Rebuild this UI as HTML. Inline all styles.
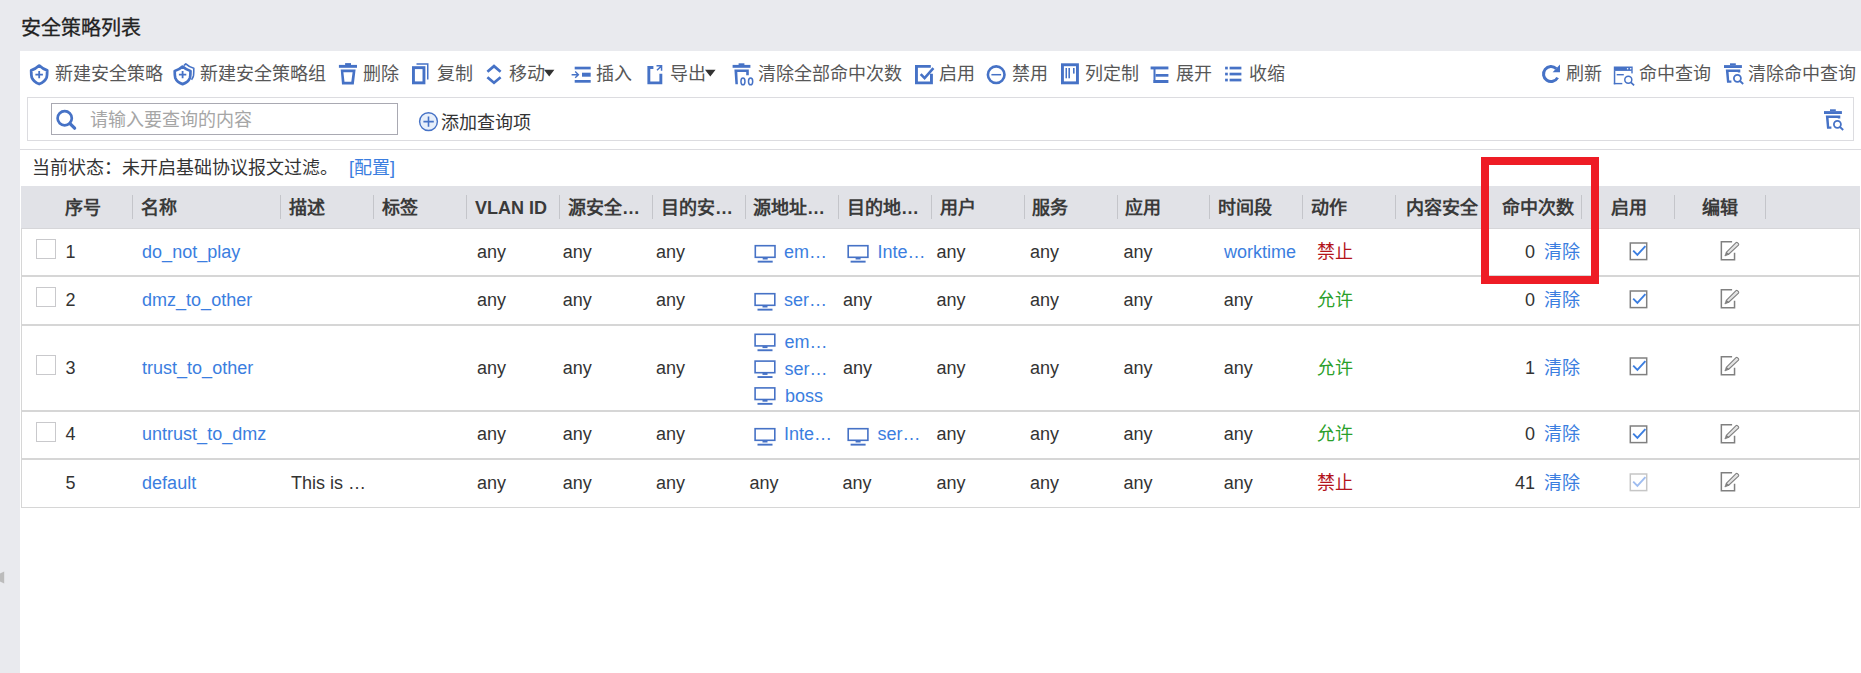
<!DOCTYPE html>
<html lang="zh-CN"><head><meta charset="utf-8"><title>安全策略列表</title>
<style>
html,body{margin:0;padding:0;background:#fff;width:1861px;height:673px;overflow:hidden;font-family:"Liberation Sans",sans-serif}
.t{position:absolute;white-space:nowrap;line-height:20px}
.b{position:absolute}
svg{position:absolute;left:0;top:0}
</style></head><body>
<div class="b" style="left:0px;top:0px;width:1861px;height:51px;background:#e9eaee;"></div>
<div class="b" style="left:0px;top:0px;width:20px;height:673px;background:#e9eaee;"></div>
<div class="t" style="left:21px;top:18px;font-size:20px;color:#222;-webkit-text-stroke:0.3px #222;">安全策略列表</div>
<div class="t" style="left:55px;top:64px;font-size:18px;color:#575757;">新建安全策略</div>
<div class="t" style="left:200px;top:64px;font-size:18px;color:#575757;">新建安全策略组</div>
<div class="t" style="left:362.5px;top:64px;font-size:18px;color:#575757;">删除</div>
<div class="t" style="left:436.5px;top:64px;font-size:18px;color:#575757;">复制</div>
<div class="t" style="left:508.7px;top:64px;font-size:18px;color:#575757;">移动</div>
<div class="t" style="left:596.4px;top:64px;font-size:18px;color:#575757;">插入</div>
<div class="t" style="left:670px;top:64px;font-size:18px;color:#575757;">导出</div>
<div class="t" style="left:757.6px;top:64px;font-size:18px;color:#575757;">清除全部命中次数</div>
<div class="t" style="left:939px;top:64px;font-size:18px;color:#575757;">启用</div>
<div class="t" style="left:1012px;top:64px;font-size:18px;color:#575757;">禁用</div>
<div class="t" style="left:1085px;top:64px;font-size:18px;color:#575757;">列定制</div>
<div class="t" style="left:1176.4px;top:64px;font-size:18px;color:#575757;">展开</div>
<div class="t" style="left:1248.5px;top:64px;font-size:18px;color:#575757;">收缩</div>
<div class="t" style="left:1565.5px;top:64px;font-size:18px;color:#575757;">刷新</div>
<div class="t" style="left:1639px;top:64px;font-size:18px;color:#575757;">命中查询</div>
<div class="t" style="left:1747.8px;top:64px;font-size:18px;color:#575757;">清除命中查询</div>
<div class="b" style="left:27px;top:97px;width:1826px;height:43px;background:transparent;border:1px solid #dcdce0;box-sizing:border-box;width:1827px;height:44px"></div>
<div class="b" style="left:51px;top:103px;width:347px;height:32px;background:#fff;border:1px solid #a9a9b2;box-sizing:border-box"></div>
<div class="t" style="left:89.5px;top:110px;font-size:18px;color:#a6a6a6;">请输入要查询的内容</div>
<div class="t" style="left:440.5px;top:112.5px;font-size:18px;color:#333;">添加查询项</div>
<div class="b" style="left:20px;top:149px;width:1841px;height:1px;background:#dcdce0;"></div>
<div class="t" style="left:32px;top:158px;font-size:18px;color:#333;">当前状态：未开启基础协议报文过滤。</div>
<div class="t" style="left:349px;top:158px;font-size:18px;color:#3b7ee0;">[配置]</div>
<div class="b" style="left:21px;top:186px;width:1839px;height:42px;background:#e1e2e7;"></div>
<div class="b" style="left:21px;top:228px;width:1839px;height:1px;background:#d6d6d9;"></div>
<div class="b" style="left:132px;top:195px;width:1px;height:24px;background:#c4c5ca;"></div>
<div class="b" style="left:280px;top:195px;width:1px;height:24px;background:#c4c5ca;"></div>
<div class="b" style="left:373px;top:195px;width:1px;height:24px;background:#c4c5ca;"></div>
<div class="b" style="left:466px;top:195px;width:1px;height:24px;background:#c4c5ca;"></div>
<div class="b" style="left:559px;top:195px;width:1px;height:24px;background:#c4c5ca;"></div>
<div class="b" style="left:652px;top:195px;width:1px;height:24px;background:#c4c5ca;"></div>
<div class="b" style="left:745px;top:195px;width:1px;height:24px;background:#c4c5ca;"></div>
<div class="b" style="left:838px;top:195px;width:1px;height:24px;background:#c4c5ca;"></div>
<div class="b" style="left:931px;top:195px;width:1px;height:24px;background:#c4c5ca;"></div>
<div class="b" style="left:1024px;top:195px;width:1px;height:24px;background:#c4c5ca;"></div>
<div class="b" style="left:1117px;top:195px;width:1px;height:24px;background:#c4c5ca;"></div>
<div class="b" style="left:1209px;top:195px;width:1px;height:24px;background:#c4c5ca;"></div>
<div class="b" style="left:1302px;top:195px;width:1px;height:24px;background:#c4c5ca;"></div>
<div class="b" style="left:1395px;top:195px;width:1px;height:24px;background:#c4c5ca;"></div>
<div class="b" style="left:1581px;top:195px;width:1px;height:24px;background:#c4c5ca;"></div>
<div class="b" style="left:1674px;top:195px;width:1px;height:24px;background:#c4c5ca;"></div>
<div class="b" style="left:1765px;top:195px;width:1px;height:24px;background:#c4c5ca;"></div>
<div class="t" style="left:65px;top:198px;font-size:18px;color:#3a3a3a;font-weight:bold;">序号</div>
<div class="t" style="left:141px;top:198px;font-size:18px;color:#3a3a3a;font-weight:bold;">名称</div>
<div class="t" style="left:289px;top:198px;font-size:18px;color:#3a3a3a;font-weight:bold;">描述</div>
<div class="t" style="left:382px;top:198px;font-size:18px;color:#3a3a3a;font-weight:bold;">标签</div>
<div class="t" style="left:475px;top:198px;font-size:18px;color:#3a3a3a;font-weight:bold;">VLAN ID</div>
<div class="t" style="left:568px;top:198px;font-size:18px;color:#3a3a3a;font-weight:bold;">源安全…</div>
<div class="t" style="left:661px;top:198px;font-size:18px;color:#3a3a3a;font-weight:bold;">目的安…</div>
<div class="t" style="left:753px;top:198px;font-size:18px;color:#3a3a3a;font-weight:bold;">源地址…</div>
<div class="t" style="left:847px;top:198px;font-size:18px;color:#3a3a3a;font-weight:bold;">目的地…</div>
<div class="t" style="left:940px;top:198px;font-size:18px;color:#3a3a3a;font-weight:bold;">用户</div>
<div class="t" style="left:1032px;top:198px;font-size:18px;color:#3a3a3a;font-weight:bold;">服务</div>
<div class="t" style="left:1125px;top:198px;font-size:18px;color:#3a3a3a;font-weight:bold;">应用</div>
<div class="t" style="left:1218px;top:198px;font-size:18px;color:#3a3a3a;font-weight:bold;">时间段</div>
<div class="t" style="left:1311px;top:198px;font-size:18px;color:#3a3a3a;font-weight:bold;">动作</div>
<div class="t" style="left:1406px;top:198px;font-size:18px;color:#3a3a3a;font-weight:bold;">内容安全</div>
<div class="t" style="left:1502px;top:198px;font-size:18px;color:#3a3a3a;font-weight:bold;">命中次数</div>
<div class="t" style="left:1611px;top:198px;font-size:18px;color:#3a3a3a;font-weight:bold;">启用</div>
<div class="t" style="left:1702px;top:198px;font-size:18px;color:#3a3a3a;font-weight:bold;">编辑</div>
<div class="b" style="left:21px;top:229px;width:1px;height:279px;background:#d6d6d6;"></div>
<div class="b" style="left:1859px;top:229px;width:1px;height:279px;background:#d6d6d6;"></div>
<div class="b" style="left:21px;top:275px;width:1839px;height:2px;background:#d6d6d6;"></div>
<div class="b" style="left:21px;top:324px;width:1839px;height:2px;background:#d6d6d6;"></div>
<div class="b" style="left:21px;top:410px;width:1839px;height:2px;background:#d6d6d6;"></div>
<div class="b" style="left:21px;top:458px;width:1839px;height:2px;background:#d6d6d6;"></div>
<div class="b" style="left:21px;top:507px;width:1839px;height:1px;background:#d6d6d6;"></div>
<div class="b" style="left:36px;top:239px;width:20px;height:20px;background:#fff;border:1.5px solid #c9c9cc;box-sizing:border-box"></div>
<div class="t" style="left:65.5px;top:242px;font-size:18px;color:#333;">1</div>
<div class="t" style="left:142.1px;top:242px;font-size:18px;color:#3b7ee0;">do_not_play</div>
<div class="t" style="left:477.0px;top:242px;font-size:18px;color:#333;">any</div>
<div class="t" style="left:562.7px;top:242px;font-size:18px;color:#333;">any</div>
<div class="t" style="left:656.0px;top:242px;font-size:18px;color:#333;">any</div>
<div class="t" style="left:936.5px;top:242px;font-size:18px;color:#333;">any</div>
<div class="t" style="left:1030.0px;top:242px;font-size:18px;color:#333;">any</div>
<div class="t" style="left:1123.5px;top:242px;font-size:18px;color:#333;">any</div>
<div class="b" style="left:36px;top:287px;width:20px;height:20px;background:#fff;border:1.5px solid #c9c9cc;box-sizing:border-box"></div>
<div class="t" style="left:65.5px;top:290px;font-size:18px;color:#333;">2</div>
<div class="t" style="left:142.1px;top:290px;font-size:18px;color:#3b7ee0;">dmz_to_other</div>
<div class="t" style="left:477.0px;top:290px;font-size:18px;color:#333;">any</div>
<div class="t" style="left:562.7px;top:290px;font-size:18px;color:#333;">any</div>
<div class="t" style="left:656.0px;top:290px;font-size:18px;color:#333;">any</div>
<div class="t" style="left:936.5px;top:290px;font-size:18px;color:#333;">any</div>
<div class="t" style="left:1030.0px;top:290px;font-size:18px;color:#333;">any</div>
<div class="t" style="left:1123.5px;top:290px;font-size:18px;color:#333;">any</div>
<div class="b" style="left:36px;top:355px;width:20px;height:20px;background:#fff;border:1.5px solid #c9c9cc;box-sizing:border-box"></div>
<div class="t" style="left:65.5px;top:358px;font-size:18px;color:#333;">3</div>
<div class="t" style="left:142.1px;top:358px;font-size:18px;color:#3b7ee0;">trust_to_other</div>
<div class="t" style="left:477.0px;top:358px;font-size:18px;color:#333;">any</div>
<div class="t" style="left:562.7px;top:358px;font-size:18px;color:#333;">any</div>
<div class="t" style="left:656.0px;top:358px;font-size:18px;color:#333;">any</div>
<div class="t" style="left:936.5px;top:358px;font-size:18px;color:#333;">any</div>
<div class="t" style="left:1030.0px;top:358px;font-size:18px;color:#333;">any</div>
<div class="t" style="left:1123.5px;top:358px;font-size:18px;color:#333;">any</div>
<div class="b" style="left:36px;top:422px;width:20px;height:20px;background:#fff;border:1.5px solid #c9c9cc;box-sizing:border-box"></div>
<div class="t" style="left:65.5px;top:424px;font-size:18px;color:#333;">4</div>
<div class="t" style="left:142.1px;top:424px;font-size:18px;color:#3b7ee0;">untrust_to_dmz</div>
<div class="t" style="left:477.0px;top:424px;font-size:18px;color:#333;">any</div>
<div class="t" style="left:562.7px;top:424px;font-size:18px;color:#333;">any</div>
<div class="t" style="left:656.0px;top:424px;font-size:18px;color:#333;">any</div>
<div class="t" style="left:936.5px;top:424px;font-size:18px;color:#333;">any</div>
<div class="t" style="left:1030.0px;top:424px;font-size:18px;color:#333;">any</div>
<div class="t" style="left:1123.5px;top:424px;font-size:18px;color:#333;">any</div>
<div class="t" style="left:65.5px;top:473px;font-size:18px;color:#333;">5</div>
<div class="t" style="left:142.1px;top:473px;font-size:18px;color:#3b7ee0;">default</div>
<div class="t" style="left:477.0px;top:473px;font-size:18px;color:#333;">any</div>
<div class="t" style="left:562.7px;top:473px;font-size:18px;color:#333;">any</div>
<div class="t" style="left:656.0px;top:473px;font-size:18px;color:#333;">any</div>
<div class="t" style="left:936.5px;top:473px;font-size:18px;color:#333;">any</div>
<div class="t" style="left:1030.0px;top:473px;font-size:18px;color:#333;">any</div>
<div class="t" style="left:1123.5px;top:473px;font-size:18px;color:#333;">any</div>
<div class="t" style="left:784.0px;top:242px;font-size:18px;color:#3b7ee0;">em…</div>
<div class="t" style="left:877.5px;top:242px;font-size:18px;color:#3b7ee0;">Inte…</div>
<div class="t" style="left:1224.0px;top:242px;font-size:18px;color:#3b7ee0;">worktime</div>
<div class="t" style="left:1316.5px;top:242px;font-size:18px;color:#b3141c;">禁止</div>
<div class="t" style="left:784.0px;top:290px;font-size:18px;color:#3b7ee0;">ser…</div>
<div class="t" style="left:843.0px;top:290px;font-size:18px;color:#333;">any</div>
<div class="t" style="left:1223.7px;top:290px;font-size:18px;color:#333;">any</div>
<div class="t" style="left:1316.5px;top:290px;font-size:18px;color:#2aa02a;">允许</div>
<div class="t" style="left:784.4px;top:332px;font-size:18px;color:#3b7ee0;">em…</div>
<div class="t" style="left:784.4px;top:359px;font-size:18px;color:#3b7ee0;">ser…</div>
<div class="t" style="left:785.0px;top:386px;font-size:18px;color:#3b7ee0;">boss</div>
<div class="t" style="left:843.1px;top:358px;font-size:18px;color:#333;">any</div>
<div class="t" style="left:1223.7px;top:358px;font-size:18px;color:#333;">any</div>
<div class="t" style="left:1316.5px;top:358px;font-size:18px;color:#2aa02a;">允许</div>
<div class="t" style="left:784.0px;top:424px;font-size:18px;color:#3b7ee0;">Inte…</div>
<div class="t" style="left:877.5px;top:424px;font-size:18px;color:#3b7ee0;">ser…</div>
<div class="t" style="left:1223.7px;top:424px;font-size:18px;color:#333;">any</div>
<div class="t" style="left:1316.5px;top:424px;font-size:18px;color:#2aa02a;">允许</div>
<div class="t" style="left:291.1px;top:473px;font-size:18px;color:#333;">This is …</div>
<div class="t" style="left:749.5px;top:473px;font-size:18px;color:#333;">any</div>
<div class="t" style="left:842.5px;top:473px;font-size:18px;color:#333;">any</div>
<div class="t" style="left:1223.7px;top:473px;font-size:18px;color:#333;">any</div>
<div class="t" style="left:1316.5px;top:473px;font-size:18px;color:#b3141c;">禁止</div>
<div class="t" style="left:1435px;top:242px;width:100px;text-align:right;font-size:18px;color:#333">0</div>
<div class="t" style="left:1544px;top:242px;font-size:18px;color:#3b7ee0;">清除</div>
<div class="t" style="left:1435px;top:290px;width:100px;text-align:right;font-size:18px;color:#333">0</div>
<div class="t" style="left:1544px;top:290px;font-size:18px;color:#3b7ee0;">清除</div>
<div class="t" style="left:1435px;top:358px;width:100px;text-align:right;font-size:18px;color:#333">1</div>
<div class="t" style="left:1544px;top:358px;font-size:18px;color:#3b7ee0;">清除</div>
<div class="t" style="left:1435px;top:424px;width:100px;text-align:right;font-size:18px;color:#333">0</div>
<div class="t" style="left:1544px;top:424px;font-size:18px;color:#3b7ee0;">清除</div>
<div class="t" style="left:1435px;top:473px;width:100px;text-align:right;font-size:18px;color:#333">41</div>
<div class="t" style="left:1544px;top:473px;font-size:18px;color:#3b7ee0;">清除</div>
<div class="b" style="left:1481px;top:157px;width:118px;height:127px;background:transparent;border:8px solid #ee1c25;box-sizing:border-box"></div>
<svg width="1861" height="673" viewBox="0 0 1861 673">
<path d="M39.2,65.6 C36.8,67.9 34.2,69.5 31.2,70.4 C31.2,73 31.2,75.5 31.8,77.5 C33,80.7 35.8,82.8 39.2,84 C42.6,82.8 45.4,80.7 46.6,77.5 C47.2,75.5 47.2,73 47.2,70.4 C44.2,69.5 41.6,67.9 39.2,65.6 Z" fill="none" stroke="#4672c6" stroke-width="2.8" stroke-linejoin="round"/>
<path d="M35.4,74.6 H42.9 M39.2,70.9 V78.3" stroke="#4672c6" stroke-width="1.8"/>
<path d="M182.6,66.6 C180.3,68.8 177.7,70.2 174.7,71 C174.7,73.5 174.7,76 175.3,78 C176.5,81 179.3,83 182.6,84.1 C185.9,83 188.7,81 189.9,78 C190.5,76 190.5,73.5 190.5,71 C187.5,70.2 184.9,68.8 182.6,66.6 Z" fill="none" stroke="#4672c6" stroke-width="2.7" stroke-linejoin="round"/>
<path d="M184,65.6 C184.6,64.9 185.2,64.4 185.8,63.8 C188.2,66 190.8,67.4 193.8,68.2 C193.8,71 193.8,74 193.4,76 C193,77.6 192.3,78.8 191.5,79.8" fill="none" stroke="#4672c6" stroke-width="1.6" stroke-linejoin="round"/>
<path d="M178.9,74.6 H186.3 M182.6,70.9 V78.3" stroke="#4672c6" stroke-width="1.8"/>
<rect x="345.1" y="63.1" width="5.9" height="2" fill="#4672c6"/><rect x="338.9" y="64.9" width="18.1" height="2.9" fill="#4672c6"/>
<path fill="#4672c6" fill-rule="evenodd" d="M340.7,69.6 H355.6 L353.8,84.5 H342 Z M343.4,72.3 L344.5,81.8 H351.3 L352.6,72.3 Z"/>
<rect x="413.45" y="67.65" width="10.5" height="15.2" fill="none" stroke="#4672c6" stroke-width="2.9"/>
<path d="M416.5,64.1 H427.75 V79.6" fill="none" stroke="#4672c6" stroke-width="1.5"/>
<path d="M487.4,71.7 L494,66.1 L500.6,71.7 M487.4,77.2 L494,82.8 L500.6,77.2" fill="none" stroke="#4672c6" stroke-width="2.7"/>
<rect x="574.7" y="66.7" width="16" height="2.7" fill="#4672c6"/><rect x="582" y="72.7" width="8.7" height="4" fill="#4672c6"/><rect x="574.7" y="80" width="16" height="2.7" fill="#4672c6"/>
<path d="M571.6,74.7 H578.2 M575.2,71.6 L578.4,74.7 L575.2,77.8" fill="none" stroke="#4672c6" stroke-width="1.4"/>
<path d="M653.4,67.55 H648.85 V82.85 H660.85 V73.8" fill="none" stroke="#4672c6" stroke-width="2.9"/>
<path d="M656.5,65.85 H661.55 V70.7 M657,70.3 L661.2,66.2" fill="none" stroke="#4672c6" stroke-width="1.5"/>
<path d="M544,69.8 H554.4 L549.2,76.5 Z M705,69.8 H715.6 L710.3,76.5 Z" fill="#333"/>
<rect x="738.6" y="63.3" width="5.8" height="1.8" fill="#4672c6"/><rect x="732.6" y="64.9" width="17.8" height="2.9" fill="#4672c6"/>
<path fill="#4672c6" d="M734.4,69.6 H748.8 V75.2 H746.2 V71.9 H737.3 L737.9,84.3 H735.4 Z"/>
<ellipse cx="742.95" cy="81.4" rx="2" ry="3.4" fill="none" stroke="#4672c6" stroke-width="1.5"/><ellipse cx="750.6" cy="81.4" rx="2.1" ry="3.4" fill="none" stroke="#4672c6" stroke-width="1.5"/>
<path d="M930.8,66.35 H916.45 V82.85 H931.45 V73.8" fill="none" stroke="#4672c6" stroke-width="2.9"/>
<path d="M920.7,74.2 L924.6,78.2 L933.4,68.2" fill="none" stroke="#4672c6" stroke-width="2.6"/>
<circle cx="996.2" cy="74.7" r="8.3" fill="none" stroke="#4672c6" stroke-width="2.6"/><path d="M991.4,74.7 H1001.1" stroke="#4672c6" stroke-width="1.5"/>
<rect x="1062.45" y="64.75" width="15" height="18.1" fill="none" stroke="#4672c6" stroke-width="2.9"/>
<rect x="1065.5" y="68" width="1.5" height="10.3" fill="#4672c6"/><rect x="1068.4" y="68" width="1.6" height="10.3" fill="#4672c6"/><rect x="1073" y="68" width="1.6" height="5.6" fill="#4672c6"/>
<rect x="1150.6" y="66.5" width="17.8" height="2.9" fill="#4672c6"/><rect x="1153.5" y="69" width="2" height="14" fill="#4672c6"/><rect x="1155.5" y="74" width="12.9" height="2.7" fill="#4672c6"/><rect x="1153.5" y="80" width="14.9" height="3" fill="#4672c6"/>
<rect x="1225.1" y="66.7" width="2.7" height="2.7" fill="#4672c6"/><rect x="1229.6" y="66.7" width="11.8" height="2.7" fill="#4672c6"/>
<rect x="1225.1" y="72.7" width="2.7" height="2.7" fill="#4672c6"/><rect x="1229.6" y="72.7" width="11.8" height="2.7" fill="#4672c6"/>
<rect x="1225.1" y="78.7" width="2.7" height="2.7" fill="#4672c6"/><rect x="1229.6" y="78.7" width="11.8" height="2.7" fill="#4672c6"/>
<path d="M1556.2,68.6 A7.5,7.5 0 1 0 1557.6,77.6" fill="none" stroke="#4672c6" stroke-width="3"/>
<path d="M1560,64.6 V72.3 H1552.6 Z" fill="#4672c6"/>
<rect x="1613.8" y="66.5" width="18.9" height="4.4" fill="#4672c6"/><circle cx="1627.6" cy="68.7" r="0.8" fill="#fff"/><circle cx="1630.7" cy="68.7" r="0.8" fill="#fff"/>
<rect x="1613.8" y="70.9" width="1.5" height="13.4" fill="#4672c6"/><rect x="1613.8" y="82.9" width="8.5" height="1.4" fill="#4672c6"/><rect x="1631.3" y="70.9" width="1.4" height="2.5" fill="#4672c6"/><rect x="1616.7" y="74" width="7.1" height="1.4" fill="#4672c6"/>
<circle cx="1628.3" cy="79.8" r="3.5" fill="none" stroke="#4672c6" stroke-width="1.5"/><path d="M1630.9,82.4 L1634.1,85.4" stroke="#4672c6" stroke-width="1.8"/>
<rect x="1730" y="63.3" width="5.8" height="1.7" fill="#4672c6"/><rect x="1724" y="65.1" width="17.9" height="2.9" fill="#4672c6"/><path fill="#4672c6" d="M1725.8,69.6 H1740.3 V72.6 H1737.8 V71.9 H1728.6 L1729.2,80.4 H1731.4 V82.7 H1727 Z"/><circle cx="1737.4" cy="78.3" r="3.5" fill="none" stroke="#4672c6" stroke-width="1.8"/><path d="M1740,81 L1743.2,84" stroke="#4672c6" stroke-width="1.8"/>
<g transform="translate(100,46)"><rect x="1730" y="63.3" width="5.8" height="1.7" fill="#4672c6"/><rect x="1724" y="65.1" width="17.9" height="2.9" fill="#4672c6"/><path fill="#4672c6" d="M1725.8,69.6 H1740.3 V72.6 H1737.8 V71.9 H1728.6 L1729.2,80.4 H1731.4 V82.7 H1727 Z"/><circle cx="1737.4" cy="78.3" r="3.5" fill="none" stroke="#4672c6" stroke-width="1.8"/><path d="M1740,81 L1743.2,84" stroke="#4672c6" stroke-width="1.8"/></g>
<circle cx="64.7" cy="118.3" r="7.1" fill="none" stroke="#4672c6" stroke-width="2.7"/><path d="M70,123.6 L74.6,128.2" stroke="#4672c6" stroke-width="3.3" stroke-linecap="round"/>
<circle cx="428.5" cy="121.6" r="8.9" fill="#e7effb" stroke="#4672c6" stroke-width="1.4"/><path d="M423.4,121.6 H433.8 M428.5,116.5 V126.7" stroke="#4672c6" stroke-width="1.6"/>
<g transform="translate(754.5,244.9)"><rect x="0.8" y="0.8" width="19.7" height="11.6" fill="none" stroke="#4672c6" stroke-width="1.6"/><rect x="8.2" y="12.6" width="5" height="2" fill="#4672c6"/><rect x="3.2" y="15.8" width="15" height="1.9" fill="#4672c6"/></g>
<g transform="translate(847.4,244.9)"><rect x="0.8" y="0.8" width="19.7" height="11.6" fill="none" stroke="#4672c6" stroke-width="1.6"/><rect x="8.2" y="12.6" width="5" height="2" fill="#4672c6"/><rect x="3.2" y="15.8" width="15" height="1.9" fill="#4672c6"/></g>
<g transform="translate(754.3,292.9)"><rect x="0.8" y="0.8" width="19.7" height="11.6" fill="none" stroke="#4672c6" stroke-width="1.6"/><rect x="8.2" y="12.6" width="5" height="2" fill="#4672c6"/><rect x="3.2" y="15.8" width="15" height="1.9" fill="#4672c6"/></g>
<g transform="translate(754.3,333.5)"><rect x="0.8" y="0.8" width="19.7" height="11.6" fill="none" stroke="#4672c6" stroke-width="1.6"/><rect x="8.2" y="12.6" width="5" height="2" fill="#4672c6"/><rect x="3.2" y="15.8" width="15" height="1.9" fill="#4672c6"/></g>
<g transform="translate(754.3,360.3)"><rect x="0.8" y="0.8" width="19.7" height="11.6" fill="none" stroke="#4672c6" stroke-width="1.6"/><rect x="8.2" y="12.6" width="5" height="2" fill="#4672c6"/><rect x="3.2" y="15.8" width="15" height="1.9" fill="#4672c6"/></g>
<g transform="translate(754.3,387.1)"><rect x="0.8" y="0.8" width="19.7" height="11.6" fill="none" stroke="#4672c6" stroke-width="1.6"/><rect x="8.2" y="12.6" width="5" height="2" fill="#4672c6"/><rect x="3.2" y="15.8" width="15" height="1.9" fill="#4672c6"/></g>
<g transform="translate(754.3,427.9)"><rect x="0.8" y="0.8" width="19.7" height="11.6" fill="none" stroke="#4672c6" stroke-width="1.6"/><rect x="8.2" y="12.6" width="5" height="2" fill="#4672c6"/><rect x="3.2" y="15.8" width="15" height="1.9" fill="#4672c6"/></g>
<g transform="translate(847.4,427.9)"><rect x="0.8" y="0.8" width="19.7" height="11.6" fill="none" stroke="#4672c6" stroke-width="1.6"/><rect x="8.2" y="12.6" width="5" height="2" fill="#4672c6"/><rect x="3.2" y="15.8" width="15" height="1.9" fill="#4672c6"/></g>
<g transform="translate(0,0)"><rect x="1630.3" y="243" width="16.4" height="16.6" fill="#fff" stroke="#808080" stroke-width="1.5"/><path d="M1633.2,250.6 L1637.4,254.8 L1645.4,246.2" fill="none" stroke="#3b7ee0" stroke-width="1.9"/><path d="M1732.1,241.75 H1721.35 V259.65 H1734.55 V252.8" fill="none" stroke="#808080" stroke-width="1.5"/><path d="M1728.4,254.5 L1738.5,245.1 Q1739,244.3 1738.4,243.6 L1737.4,242.6 Q1736.7,242.1 1736,242.6 L1726.3,252.3 Z" fill="#e4e4e4" stroke="#808080" stroke-width="1.1" stroke-linejoin="round"/><path d="M1724.9,255.9 L1726.3,252.3 L1728.4,254.5 Z" fill="#808080" stroke="#808080" stroke-width="0.8" stroke-linejoin="round"/></g>
<g transform="translate(0,48)"><rect x="1630.3" y="243" width="16.4" height="16.6" fill="#fff" stroke="#808080" stroke-width="1.5"/><path d="M1633.2,250.6 L1637.4,254.8 L1645.4,246.2" fill="none" stroke="#3b7ee0" stroke-width="1.9"/><path d="M1732.1,241.75 H1721.35 V259.65 H1734.55 V252.8" fill="none" stroke="#808080" stroke-width="1.5"/><path d="M1728.4,254.5 L1738.5,245.1 Q1739,244.3 1738.4,243.6 L1737.4,242.6 Q1736.7,242.1 1736,242.6 L1726.3,252.3 Z" fill="#e4e4e4" stroke="#808080" stroke-width="1.1" stroke-linejoin="round"/><path d="M1724.9,255.9 L1726.3,252.3 L1728.4,254.5 Z" fill="#808080" stroke="#808080" stroke-width="0.8" stroke-linejoin="round"/></g>
<g transform="translate(0,115)"><rect x="1630.3" y="243" width="16.4" height="16.6" fill="#fff" stroke="#808080" stroke-width="1.5"/><path d="M1633.2,250.6 L1637.4,254.8 L1645.4,246.2" fill="none" stroke="#3b7ee0" stroke-width="1.9"/><path d="M1732.1,241.75 H1721.35 V259.65 H1734.55 V252.8" fill="none" stroke="#808080" stroke-width="1.5"/><path d="M1728.4,254.5 L1738.5,245.1 Q1739,244.3 1738.4,243.6 L1737.4,242.6 Q1736.7,242.1 1736,242.6 L1726.3,252.3 Z" fill="#e4e4e4" stroke="#808080" stroke-width="1.1" stroke-linejoin="round"/><path d="M1724.9,255.9 L1726.3,252.3 L1728.4,254.5 Z" fill="#808080" stroke="#808080" stroke-width="0.8" stroke-linejoin="round"/></g>
<g transform="translate(0,183)"><rect x="1630.3" y="243" width="16.4" height="16.6" fill="#fff" stroke="#808080" stroke-width="1.5"/><path d="M1633.2,250.6 L1637.4,254.8 L1645.4,246.2" fill="none" stroke="#3b7ee0" stroke-width="1.9"/><path d="M1732.1,241.75 H1721.35 V259.65 H1734.55 V252.8" fill="none" stroke="#808080" stroke-width="1.5"/><path d="M1728.4,254.5 L1738.5,245.1 Q1739,244.3 1738.4,243.6 L1737.4,242.6 Q1736.7,242.1 1736,242.6 L1726.3,252.3 Z" fill="#e4e4e4" stroke="#808080" stroke-width="1.1" stroke-linejoin="round"/><path d="M1724.9,255.9 L1726.3,252.3 L1728.4,254.5 Z" fill="#808080" stroke="#808080" stroke-width="0.8" stroke-linejoin="round"/></g>
<g transform="translate(0,231)"><rect x="1630.3" y="243" width="16.4" height="16.6" fill="#fff" stroke="#c6c6c6" stroke-width="1.5"/><path d="M1633.2,250.6 L1637.4,254.8 L1645.4,246.2" fill="none" stroke="#9fbdf0" stroke-width="1.9"/><path d="M1732.1,241.75 H1721.35 V259.65 H1734.55 V252.8" fill="none" stroke="#808080" stroke-width="1.5"/><path d="M1728.4,254.5 L1738.5,245.1 Q1739,244.3 1738.4,243.6 L1737.4,242.6 Q1736.7,242.1 1736,242.6 L1726.3,252.3 Z" fill="#e4e4e4" stroke="#808080" stroke-width="1.1" stroke-linejoin="round"/><path d="M1724.9,255.9 L1726.3,252.3 L1728.4,254.5 Z" fill="#808080" stroke="#808080" stroke-width="0.8" stroke-linejoin="round"/></g>
<path d="M0,573.4 L4.2,571.6 V583.4 L0,581.6 Z" fill="#bcbcbc"/>
</svg>
</body></html>
